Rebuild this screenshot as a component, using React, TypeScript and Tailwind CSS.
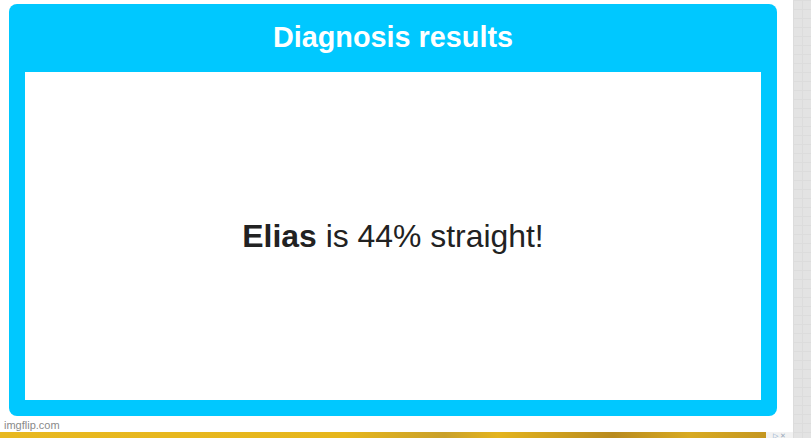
export default function App() {
  return (
    <div className="flex h-[438px] w-[811px] overflow-hidden bg-white" style={{ fontFamily: '"Liberation Sans", Arial, sans-serif' }}>
      <div className="flex w-[793px] flex-col">
        <div className="pl-[9px] pt-[4px]">
          <div className="flex h-[412px] w-[768px] flex-col rounded-[8px] bg-[#00c8ff] px-4 pb-4">
            <div className="flex h-[68px] items-center justify-center pb-[1px]">
              <h1 className="text-[28.8px] font-bold leading-none text-white">Diagnosis results</h1>
            </div>
            <div className="flex flex-1 items-center justify-center bg-white">
              <p className="pt-[1px] text-[31.9px] leading-none text-[#222]">
                <span className="font-bold">Elias</span> is 44% straight!
              </p>
            </div>
          </div>
        </div>
        <div className="h-[16px] pl-[4px] pt-[4px] text-[11px] leading-none text-[#8a8a8a]">imgflip.com</div>
        <div className="flex h-[6px]">
          <div className="flex-1 bg-[linear-gradient(90deg,#e8b820_0%,#e6b61c_45%,#c9a02a_58%,#e4b41e_65%,#b88a1e_80%,#d8aa22_90%,#c49620_100%)]" />
          <div className="flex w-[27px] items-start justify-center gap-[2px] bg-[#f2f2f2] text-[7px] leading-none text-[#7aa0c8]">
            <span>▷</span>
            <span className="text-[#9ab]">✕</span>
          </div>
        </div>
      </div>
      <div className="w-[18px] bg-[#e3e3e3] bg-[linear-gradient(#dcdcdc_1px,transparent_1px),linear-gradient(90deg,#dcdcdc_1px,transparent_1px)] bg-[size:9px_9px]" />
    </div>
  );
}
